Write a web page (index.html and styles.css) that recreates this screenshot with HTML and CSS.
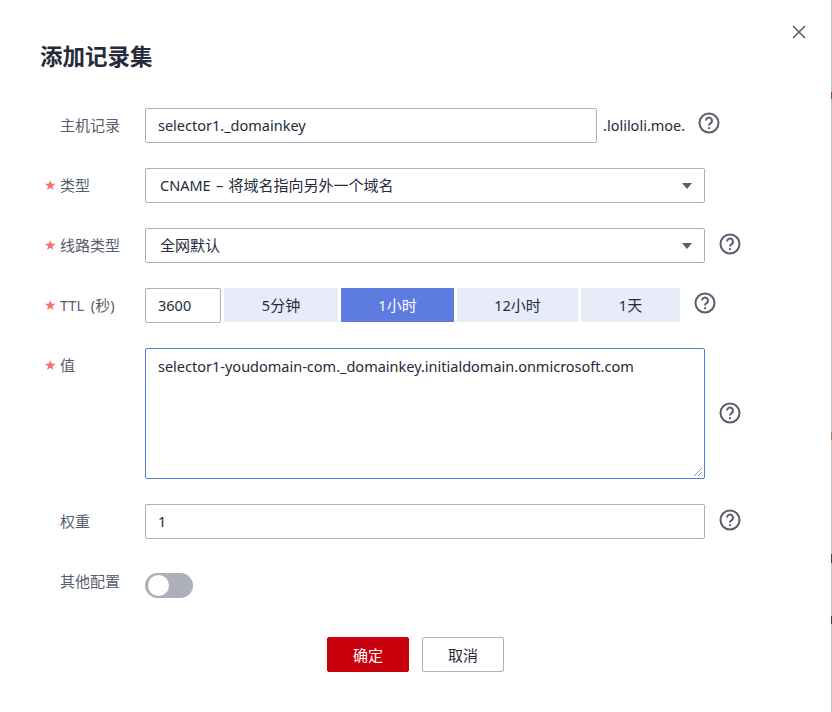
FILE: index.html
```html
<!DOCTYPE html>
<html lang="zh">
<head>
<meta charset="utf-8">
<title>添加记录集</title>
<link rel="stylesheet" href="styles.css">
</head>
<body>
<div class="dialog">
  <button class="close" aria-label="关闭">
    <svg width="14" height="14" viewBox="0 0 14 14"><path d="M1 1l12 12M13 1L1 13" class="close-x"/></svg>
  </button>
  <h1 class="title">添加记录集</h1>
  <div class="form">
    <div class="row">
      <div class="label cjk">主机记录</div>
      <div class="box host">selector1._domainkey</div>
      <span class="suffix">.loliloli.moe.</span>
      <svg class="help help-host" width="22" height="22" viewBox="0 0 22 22"><circle cx="11" cy="11" r="9.5" class="hc"/><path d="M8 8.6a3 3 0 1 1 4.6 2.5c-1 .6-1.6 1.2-1.6 2.4" class="hc"/><circle cx="11" cy="16.2" r="1.1" class="hd"/></svg>
    </div>
    <div class="row">
      <div class="label cjk"><i class="star">★</i>类型</div>
      <div class="box select"><span class="spaced">CNAME – <span class="cjk">将域名指向另外一个域名</span></span><i class="caret"></i></div>
    </div>
    <div class="row">
      <div class="label cjk"><i class="star">★</i>线路类型</div>
      <div class="box select"><span class="cjk">全网默认</span><i class="caret"></i></div>
      <svg class="help help-wide" width="22" height="22" viewBox="0 0 22 22"><circle cx="11" cy="11" r="9.5" class="hc"/><path d="M8 8.6a3 3 0 1 1 4.6 2.5c-1 .6-1.6 1.2-1.6 2.4" class="hc"/><circle cx="11" cy="16.2" r="1.1" class="hd"/></svg>
    </div>
    <div class="row">
      <div class="label spaced-label"><i class="star">★</i>TTL (<span class="cjk">秒</span>)</div>
      <div class="box ttl">3600</div>
      <div class="seg">
        <span class="opt w114">5<span class="cjk">分钟</span></span>
        <span class="opt w113 on">1<span class="cjk">小时</span></span>
        <span class="opt w121">12<span class="cjk">小时</span></span>
        <span class="opt w99 last">1<span class="cjk">天</span></span>
      </div>
      <svg class="help help-ttl" width="22" height="22" viewBox="0 0 22 22"><circle cx="11" cy="11" r="9.5" class="hc"/><path d="M8 8.6a3 3 0 1 1 4.6 2.5c-1 .6-1.6 1.2-1.6 2.4" class="hc"/><circle cx="11" cy="16.2" r="1.1" class="hd"/></svg>
    </div>
    <div class="row tall">
      <div class="label cjk"><i class="star">★</i>值</div>
      <div class="box area">selector1-youdomain-com._domainkey.initialdomain.onmicrosoft.com
        <svg class="grip" width="10" height="10" viewBox="0 0 10 10"><path d="M1 9L9 1M5 9l4-4" /></svg>
      </div>
      <svg class="help help-wide" width="22" height="22" viewBox="0 0 22 22"><circle cx="11" cy="11" r="9.5" class="hc"/><path d="M8 8.6a3 3 0 1 1 4.6 2.5c-1 .6-1.6 1.2-1.6 2.4" class="hc"/><circle cx="11" cy="16.2" r="1.1" class="hd"/></svg>
    </div>
    <div class="row">
      <div class="label cjk">权重</div>
      <div class="box wide">1</div>
      <svg class="help help-wide" width="22" height="22" viewBox="0 0 22 22"><circle cx="11" cy="11" r="9.5" class="hc"/><path d="M8 8.6a3 3 0 1 1 4.6 2.5c-1 .6-1.6 1.2-1.6 2.4" class="hc"/><circle cx="11" cy="16.2" r="1.1" class="hd"/></svg>
    </div>
    <div class="row toggle-row">
      <div class="label cjk">其他配置</div>
      <div class="toggle"><i class="knob"></i></div>
    </div>
  </div>
  <div class="actions">
    <button class="btn primary">确定</button>
    <button class="btn">取消</button>
  </div>
</div>
</body>
</html>
```
FILE: styles.css
```css
* { box-sizing: border-box; }
html, body { margin: 0; height: 100%; }
body {
  width: 832px;
  height: 712px;
  overflow: hidden;
  background: #fff;
  font-family: "Noto Sans", "Noto Sans CJK SC", sans-serif;
  font-size: 14.5px;
  color: #252b3a;
}
.cjk {
  font-family: "Noto Sans CJK SC", sans-serif;
  font-size: 15px;
}
.spaced { word-spacing: 1.5px; }
.spaced-label { word-spacing: 3px; }
.dialog {
  position: relative;
  width: 832px;
  height: 712px;
  padding: 37px 0 0 40px;
  background: #fff;
}
.dialog::after {
  content: "";
  position: absolute;
  top: 0;
  right: 0;
  width: 1px;
  height: 712px;
  background: linear-gradient(to bottom,
    #c4c4c4 0 92px, #b5343f 92px 99px, #c4c4c4 99px 432px,
    #b87a45 432px 440px, #c4c4c4 440px 554px,
    #5a3a3f 554px 563px, #c4c4c4 563px 616px,
    #5a3a3f 616px 624px, #c4c4c4 624px);
}
.close {
  position: absolute;
  top: 25px;
  right: 26px;
  width: 14px;
  height: 14px;
  padding: 0;
  border: 0;
  background: none;
  display: block;
}
.close svg { display: block; }
.close-x { stroke: #575d6c; stroke-width: 1.6; fill: none; }
.title {
  margin: 0;
  font-family: "Noto Sans CJK SC", sans-serif;
  font-size: 22.5px;
  line-height: 36px;
  font-weight: 700;
  color: #252b3a;
}
.form { margin-top: 35px; }
.row {
  display: flex;
  align-items: flex-start;
  height: 35px;
  margin-bottom: 25px;
}
.row.tall { height: 131px; }
.row.toggle-row { margin-bottom: 0; height: 25px; margin-top: 34px; }
.label {
  position: relative;
  width: 105px;
  flex: none;
  padding-left: 20px;
  line-height: 33px;
  color: #575d6c;
}
.toggle-row .label { line-height: 16px; }
.star {
  position: absolute;
  left: 4px;
  top: 0;
  font-style: normal;
  font-size: 14px;
  line-height: 35px;
  color: #f66f6a;
  font-family: "DejaVu Sans", sans-serif;
}
.box {
  height: 35px;
  border: 1px solid #adb0b8;
  border-radius: 2px;
  line-height: 33px;
  padding: 0 12px;
  background: #fff;
  color: #252b3a;
}
.host { width: 452px; }
.suffix { margin-left: 6px; line-height: 35px; color: #252b3a; }
.help { flex: none; display: block; }
.help-host { margin: 4px 0 0 13px; }
.help-wide { margin: 5px 0 0 14px; }
.help-ttl { margin: 4px 0 0 14px; }
.tall .help-wide { margin-top: 54px; }
.hc { fill: none; stroke: #575d6c; stroke-width: 2; }
.hd { fill: #575d6c; }
.select {
  width: 560px;
  display: flex;
  align-items: center;
  justify-content: space-between;
  padding: 0 12px 2px 14px;
}
.caret {
  width: 0;
  height: 0;
  margin-top: 2px;
  border-left: 5px solid transparent;
  border-right: 5px solid transparent;
  border-top: 6px solid #575d6c;
}
.ttl { width: 76px; }
.seg { display: flex; gap: 3px; margin-left: 3px; }
.opt {
  height: 34px;
  line-height: 34px;
  text-align: center;
  background: #e8ecf8;
  color: #252b3a;
}
.opt.w114 { width: 114px; border-radius: 2px 0 0 2px; }
.opt.w113 { width: 113px; }
.opt.w121 { width: 121px; }
.opt.w99 { width: 99px; }
.opt.last { border-radius: 0 2px 2px 0; }
.opt.on { background: #5e7ce0; color: #fff; }
.area {
  position: relative;
  width: 560px;
  height: 131px;
  border-color: #5e7ce0;
  line-height: 20px;
  padding: 7px 12px;
}
.grip {
  position: absolute;
  right: 1px;
  bottom: 1px;
  fill: none;
  stroke: #7e93e6;
  stroke-width: 1;
}
.wide { width: 560px; }
.toggle {
  position: relative;
  width: 48px;
  height: 25px;
  border-radius: 13px;
  background: #adb0b8;
}
.knob {
  position: absolute;
  left: 3px;
  top: 2px;
  width: 21px;
  height: 21px;
  border-radius: 50%;
  background: #fff;
}
.actions {
  display: flex;
  justify-content: flex-start;
  gap: 13px;
  margin: 39px 0 0 287px;
}
.btn {
  width: 82px;
  height: 35px;
  padding: 0;
  border: 1px solid #adb0b8;
  border-radius: 2px;
  background: #fff;
  color: #252b3a;
  font-family: "Noto Sans CJK SC", sans-serif;
  font-size: 15px;
}
.btn.primary {
  background: #c7000b;
  border-color: #c7000b;
  color: #fff;
}
```
